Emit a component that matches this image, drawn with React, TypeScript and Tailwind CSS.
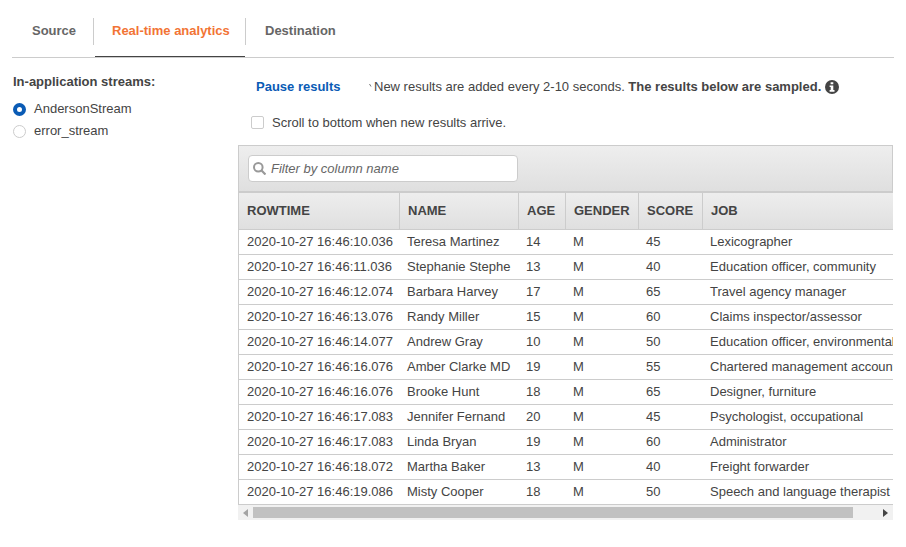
import React, { useState } from "react";

const tabs = [
  { name: "Source", width: "w-[83px] pl-[20px]" },
  { name: "Real-time analytics", width: "w-[150px] pl-[17px]" },
  { name: "Destination", width: "pl-[19px]" },
];

const streams = ["AndersonStream", "error_stream"];

const columns = [
  { name: "ROWTIME", width: "w-[161px]" },
  { name: "NAME", width: "w-[119px]" },
  { name: "AGE", width: "w-[47px]" },
  { name: "GENDER", width: "w-[73px]" },
  { name: "SCORE", width: "w-[64px]" },
  { name: "JOB", width: "w-[250px]" },
];

const rows = [
  ["2020-10-27 16:46:10.036", "Teresa Martinez", "14", "M", "45", "Lexicographer"],
  ["2020-10-27 16:46:11.036", "Stephanie Stephe", "13", "M", "40", "Education officer, community"],
  ["2020-10-27 16:46:12.074", "Barbara Harvey", "17", "M", "65", "Travel agency manager"],
  ["2020-10-27 16:46:13.076", "Randy Miller", "15", "M", "60", "Claims inspector/assessor"],
  ["2020-10-27 16:46:14.077", "Andrew Gray", "10", "M", "50", "Education officer, environmental"],
  ["2020-10-27 16:46:16.076", "Amber Clarke MD", "19", "M", "55", "Chartered management accountant"],
  ["2020-10-27 16:46:16.076", "Brooke Hunt", "18", "M", "65", "Designer, furniture"],
  ["2020-10-27 16:46:17.083", "Jennifer Fernand", "20", "M", "45", "Psychologist, occupational"],
  ["2020-10-27 16:46:17.083", "Linda Bryan", "19", "M", "60", "Administrator"],
  ["2020-10-27 16:46:18.072", "Martha Baker", "13", "M", "40", "Freight forwarder"],
  ["2020-10-27 16:46:19.086", "Misty Cooper", "18", "M", "50", "Speech and language therapist"],
];

function Tabs() {
  const [active, setActive] = useState("Real-time analytics");
  return (
    <nav className="flex h-[58px] border-b border-[#ccc]">
      {tabs.map((tab, i) => (
        <React.Fragment key={tab.name}>
          {i > 0 && (
            <span className={`mt-[18px] h-[27px] w-px shrink-0 bg-[#ccc] ${i === 1 ? "ml-[-2px] mr-px" : ""}`} />
          )}
          <button
            type="button"
            onClick={() => setActive(tab.name)}
            className={`border-b pt-[6px] text-left font-bold whitespace-nowrap ${tab.width} ${
              active === tab.name ? "border-[#444] text-[#f27435]" : "border-transparent text-[#666]"
            }`}
          >
            {tab.name}
          </button>
        </React.Fragment>
      ))}
    </nav>
  );
}

function StreamPicker() {
  const [selected, setSelected] = useState(streams[0]);
  return (
    <fieldset className="w-[226px] shrink-0 pt-4 pl-px">
      <legend className="float-left mb-[2px] h-[22px] w-full font-bold">In-application streams:</legend>
      {streams.map((stream) => (
        <label key={stream} className="clear-both flex h-[22px] items-center gap-2">
          <input
            type="radio"
            name="stream"
            checked={selected === stream}
            onChange={() => setSelected(stream)}
            className="size-[13px] appearance-none rounded-full border border-[#ccc] bg-white checked:border-4 checked:border-[#0a5bb5]"
          />
          {stream}
        </label>
      ))}
    </fieldset>
  );
}

function InfoIcon() {
  return (
    <svg viewBox="0 0 14 14" className="size-[14px] shrink-0" aria-label="Information">
      <circle cx="7" cy="7" r="7" fill="#444" />
      <path d="M5.6 2.2h2.7v2H5.6zM4.6 5.4h3.7v4.7h1.2v1.6H4.6v-1.6h1.1V7H4.6z" fill="#fff" />
    </svg>
  );
}

function ResultsTable() {
  return (
    <div className="overflow-hidden border-l border-[#ccc]">
      <table className="w-[714px] table-fixed border-separate border-spacing-0">
        <thead>
          <tr className="h-[38px] bg-linear-to-b from-[#eee] to-[#dfdfdf]">
            {columns.map((column) => (
              <th
                key={column.name}
                scope="col"
                className={`border-y border-r border-[#ccc] p-0 pl-2 text-left ${column.width}`}
              >
                {column.name}
              </th>
            ))}
          </tr>
        </thead>
        <tbody>
          {rows.map((row, r) => (
            <tr key={r} className="h-[25px]">
              {row.map((cell, c) => (
                <td
                  key={c}
                  className="border-b border-[#ccc] p-0 pl-[7px] leading-4 whitespace-nowrap first:pl-2"
                >
                  {cell}
                </td>
              ))}
            </tr>
          ))}
        </tbody>
      </table>
    </div>
  );
}

function ScrollTrack() {
  return (
    <div className="flex h-[15px] items-center bg-[#f1f1f1]">
      <button type="button" aria-label="Scroll left" className="flex w-[15px] shrink-0 justify-center">
        <svg viewBox="0 0 5 8" className="h-2 w-[5px]">
          <path d="M5 0v8L0 4z" fill="#a3a3a3" />
        </svg>
      </button>
      <div className="flex-1">
        <div className="h-[11px] w-[96%] bg-[#c1c1c1]" />
      </div>
      <button type="button" aria-label="Scroll right" className="flex w-[15px] shrink-0 justify-center">
        <svg viewBox="0 0 5 8" className="h-2 w-[5px]">
          <path d="M0 0v8l5-4z" fill="#444" />
        </svg>
      </button>
    </div>
  );
}

export default function App() {
  return (
    <div className="bg-white px-3 font-['Liberation_Sans',Arial,sans-serif] text-[13px] leading-4 text-[#444]">
      <Tabs />
      <main className="flex">
        <StreamPicker />
        <section className="mr-px min-w-0 flex-1 pt-5">
          <div className="flex h-[18px] items-center whitespace-nowrap">
            <button type="button" className="ml-[18px] w-[113px] shrink-0 text-left font-bold text-[#0a5bb5]">
              Pause results
            </button>
            <svg viewBox="0 0 3 8" className="mr-[2px] h-2 w-[3px] shrink-0">
              <path d="M.5 1l1.5 2.5" stroke="#777" strokeWidth="1" />
            </svg>
            <p>
              New results are added every 2-10 seconds. <b>The results below are sampled.</b>
            </p>
            <span className="ml-1">
              <InfoIcon />
            </span>
          </div>
          <label className="mt-[18px] ml-[13px] flex h-[18px] items-center gap-2">
            <input
              type="checkbox"
              className="mb-px size-[13px] appearance-none rounded-xs border border-[#ccc] bg-white checked:bg-[#0a5bb5]"
            />
            Scroll to bottom when new results arrive.
          </label>
          <div className="mt-[13px] flex h-[47px] border border-[#ccc] bg-linear-to-b from-[#eee] to-[#dfdfdf] px-[9px] pt-[9px]">
            <label className="flex h-[27px] w-[270px] items-center rounded border border-[#ccc] bg-white pl-1">
              <svg viewBox="0 0 13 13" className="size-[13px] shrink-0" fill="none" stroke="#999" strokeWidth="2">
                <circle cx="5.3" cy="5.3" r="4.3" />
                <path d="M8.3 8.3l4.2 4.2" strokeWidth="2.2" />
              </svg>
              <input
                type="text"
                aria-label="Filter by column name"
                placeholder="Filter by column name"
                className="ml-[5px] min-w-0 flex-1 italic outline-none placeholder:text-[#666]"
              />
            </label>
          </div>
          <ResultsTable />
          <ScrollTrack />
        </section>
      </main>
    </div>
  );
}
